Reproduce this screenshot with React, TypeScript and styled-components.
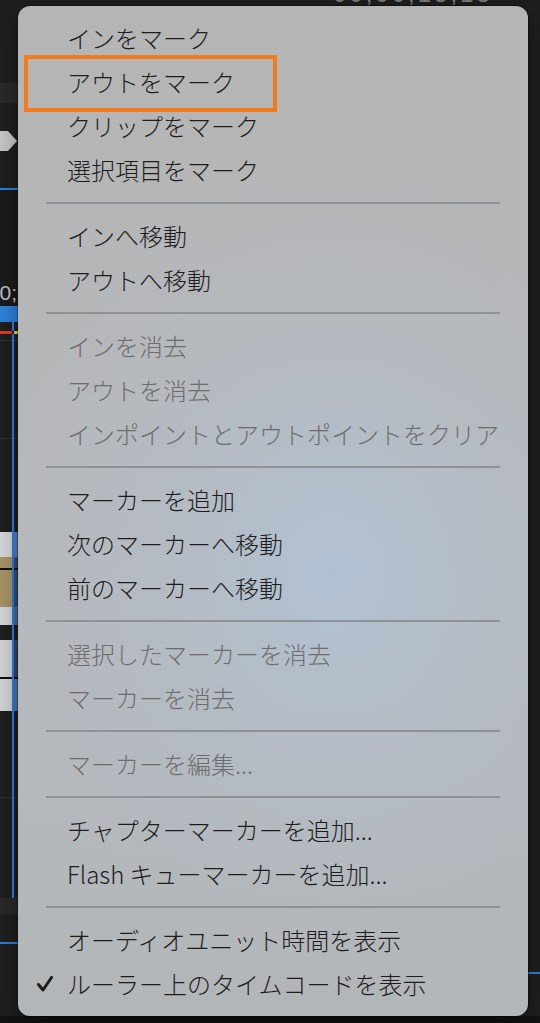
import React from 'react';
import styled, { createGlobalStyle } from 'styled-components';

const GlobalStyle = createGlobalStyle`
  html, body {
    margin: 0;
    padding: 0;
    background: #1f1f1f;
  }
  body {
    font-family: "Noto Sans CJK JP", "Noto Sans", sans-serif;
  }
`;

const Screen = styled.div`
  position: relative;
  width: 540px;
  height: 1023px;
  overflow: hidden;
  display: flex;
  flex-direction: column;
  background: #1f1f1f;
`;

const TopBar = styled.div`
  height: 6px;
  flex: none;
  overflow: hidden;
  display: flex;
  align-items: flex-start;
  background: #1e1e1e;
`;

const TopTimecode = styled.span`
  margin: -20px 0 0 333px;
  font-family: "Liberation Sans", sans-serif;
  font-size: 24px;
  letter-spacing: 3px;
  color: #7e7e7e;
`;

const Middle = styled.div`
  flex: 1;
  display: flex;
`;

const Strip = styled.div<{ $w: number }>`
  width: ${(p) => p.$w}px;
  flex: none;
  display: flex;
  flex-direction: column;
`;

const Spacer = styled.div`
  flex: 1;
`;

const Band = styled.div<{ $h: number; $bg: string; $line?: boolean }>`
  height: ${(p) => p.$h}px;
  flex: none;
  display: flex;
  align-items: center;
  justify-content: flex-end;
  overflow: hidden;
  background: ${(p) =>
    p.$line
      ? `linear-gradient(to right, transparent 12px, #2f7de0 12px, #2f7de0 14px, transparent 14px), ${p.$bg}`
      : p.$bg};
`;

const StripText = styled.span`
  font-family: "Liberation Sans", sans-serif;
  font-size: 21px;
  color: #c4c4c4;
  padding-right: 1px;
`;

const BottomBar = styled.div`
  height: 7px;
  flex: none;
  background: #121212;
`;

const Menu = styled.div`
  position: absolute;
  left: 18px;
  top: 6px;
  width: 510px;
  box-sizing: border-box;
  padding: 10px 0;
  border-radius: 12px;
  background:
    radial-gradient(ellipse 70% 40% at 62% 56%, rgba(176, 196, 218, 0.75) 0%, rgba(180, 192, 206, 0.4) 50%, rgba(180, 180, 180, 0) 100%),
    linear-gradient(to bottom, #b5b5b5 0%, #b6b7b9 40%, #b5b8bc 75%, #b3b6b9 100%);
  box-shadow: 0 0 0 1px rgba(0, 0, 0, 0.35), 0 8px 24px rgba(0, 0, 0, 0.4);
  display: flex;
  flex-direction: column;
`;

const Item = styled.div<{ $disabled?: boolean }>`
  position: relative;
  height: 44px;
  display: flex;
  align-items: center;
  font-size: 24px;
  font-weight: 300;
  line-height: 1;
  color: ${(p) => (p.$disabled ? '#6d6d6f' : '#1d1d1d')};
  white-space: nowrap;
`;

const CheckSlot = styled.span`
  width: 49px;
  flex: none;
  display: flex;
  align-items: center;
  padding-left: 19px;
  box-sizing: border-box;
`;

const Label = styled.span`
  display: block;
`;

const Callout = styled.div`
  position: absolute;
  left: 6px;
  top: -5px;
  width: 253px;
  height: 57px;
  box-sizing: border-box;
  border: 4px solid #f47a1e;
  pointer-events: none;
`;

const Separator = styled.div`
  height: 22px;
  display: flex;
  align-items: center;
  padding: 0 28px;
`;

const Rule = styled.div`
  flex: 1;
  height: 2px;
  background: #8e9195;
`;

type Entry =
  | { kind: 'item'; label: string; disabled?: boolean; checked?: boolean; callout?: boolean }
  | { kind: 'sep' };

const entries: Entry[] = [
  { kind: 'item', label: 'インをマーク' },
  { kind: 'item', label: 'アウトをマーク', callout: true },
  { kind: 'item', label: 'クリップをマーク' },
  { kind: 'item', label: '選択項目をマーク' },
  { kind: 'sep' },
  { kind: 'item', label: 'インへ移動' },
  { kind: 'item', label: 'アウトへ移動' },
  { kind: 'sep' },
  { kind: 'item', label: 'インを消去', disabled: true },
  { kind: 'item', label: 'アウトを消去', disabled: true },
  { kind: 'item', label: 'インポイントとアウトポイントをクリア', disabled: true },
  { kind: 'sep' },
  { kind: 'item', label: 'マーカーを追加' },
  { kind: 'item', label: '次のマーカーへ移動' },
  { kind: 'item', label: '前のマーカーへ移動' },
  { kind: 'sep' },
  { kind: 'item', label: '選択したマーカーを消去', disabled: true },
  { kind: 'item', label: 'マーカーを消去', disabled: true },
  { kind: 'sep' },
  { kind: 'item', label: 'マーカーを編集...', disabled: true },
  { kind: 'sep' },
  { kind: 'item', label: 'チャプターマーカーを追加...' },
  { kind: 'item', label: 'Flash キューマーカーを追加...' },
  { kind: 'sep' },
  { kind: 'item', label: 'オーディオユニット時間を表示' },
  { kind: 'item', label: 'ルーラー上のタイムコードを表示', checked: true },
];

type StripBand = { h: number; bg: string; line?: boolean; text?: string; play?: boolean };

const leftBands: StripBand[] = [
  { h: 77, bg: '#1f1f1f' },
  { h: 20, bg: '#2a2a2a' },
  { h: 27, bg: '#1f1f1f' },
  { h: 22, bg: '#1f1f1f', play: true },
  { h: 36, bg: '#1f1f1f' },
  { h: 2, bg: '#2f7de0' },
  { h: 90, bg: '#1b1b1b' },
  { h: 26, bg: '#1b1b1b', text: '0;' },
  { h: 16, bg: '#3083df' },
  { h: 9, bg: '#1f1f1f', line: true },
  { h: 3, bg: 'linear-gradient(to right, #e0392a 12px, #1f1f1f 12px, #1f1f1f 14px, #d8e03a 14px)' },
  { h: 6, bg: '#1f1f1f', line: true },
  { h: 1, bg: '#333333', line: true },
  { h: 97, bg: '#1f1f1f', line: true },
  { h: 1, bg: '#303030', line: true },
  { h: 93, bg: '#1f1f1f', line: true },
  { h: 25, bg: 'linear-gradient(to right, #d6d8dc 12px, #1f1f1f 12px, #1f1f1f 14px, #5a7fb8 14px)', line: true },
  { h: 11, bg: 'linear-gradient(to right, #a89469 12px, #1f1f1f 12px, #1f1f1f 14px, #35506f 14px)', line: true },
  { h: 2, bg: '#0e0e0e', line: true },
  { h: 37, bg: 'linear-gradient(to right, #a89469 12px, #1f1f1f 12px, #1f1f1f 14px, #35506f 14px)', line: true },
  { h: 18, bg: 'linear-gradient(to right, #d4d6da 12px, #1f1f1f 12px, #1f1f1f 14px, #4a6c9c 14px)', line: true },
  { h: 15, bg: '#1f1f1f', line: true },
  { h: 37, bg: 'linear-gradient(to right, #d2d4d8 12px, #1f1f1f 12px, #1f1f1f 14px, #34465f 14px)', line: true },
  { h: 2, bg: '#0e0e0e', line: true },
  { h: 32, bg: 'linear-gradient(to right, #d2d4d8 12px, #1f1f1f 12px, #1f1f1f 14px, #4f74a8 14px)', line: true },
  { h: 86, bg: '#1f1f1f', line: true },
  { h: 1, bg: '#333333', line: true },
  { h: 100, bg: '#1f1f1f', line: true },
  { h: 17, bg: '#292929' },
  { h: 27, bg: '#1f1f1f' },
  { h: 2, bg: '#2f7de0' },
  { h: 42, bg: '#1f1f1f' },
];

const rightBands: StripBand[] = [
  { h: 966, bg: '#1f1f1f' },
  { h: 2, bg: '#2f7de0' },
  { h: 42, bg: '#1f1f1f' },
];

const PlayTip = () => (
  <svg width="18" height="22" viewBox="0 0 18 22">
    <polygon points="0,1 8,1 17,11 8,21 0,21" fill="#c8c8c8" />
  </svg>
);

const CheckMark = () => (
  <svg width="16" height="16" viewBox="0 0 16 16">
    <path d="M1.5 8.5 L6 14 L14.5 1.5" fill="none" stroke="#1d1d1d" strokeWidth="3" strokeLinecap="round" strokeLinejoin="round" />
  </svg>
);

const renderStrip = (bands: StripBand[]) =>
  bands.map((b, i) => (
    <Band key={i} $h={b.h} $bg={b.bg} $line={b.line}>
      {b.text && <StripText>{b.text}</StripText>}
      {b.play && <PlayTip />}
    </Band>
  ));

const App = () => {
  return (
    <Screen>
      <GlobalStyle />
      <TopBar>
        <TopTimecode>00;00;18;18</TopTimecode>
      </TopBar>
      <Middle>
        <Strip $w={18}>{renderStrip(leftBands)}</Strip>
        <Spacer />
        <Strip $w={12}>{renderStrip(rightBands)}</Strip>
      </Middle>
      <BottomBar />
      <Menu>
        {entries.map((e, i) =>
          e.kind === 'sep' ? (
            <Separator key={i}>
              <Rule />
            </Separator>
          ) : (
            <Item key={i} $disabled={e.disabled}>
              <CheckSlot>{e.checked && <CheckMark />}</CheckSlot>
              <Label>{e.label}</Label>
              {e.callout && <Callout />}
            </Item>
          )
        )}
      </Menu>
    </Screen>
  );
};

export default App;
